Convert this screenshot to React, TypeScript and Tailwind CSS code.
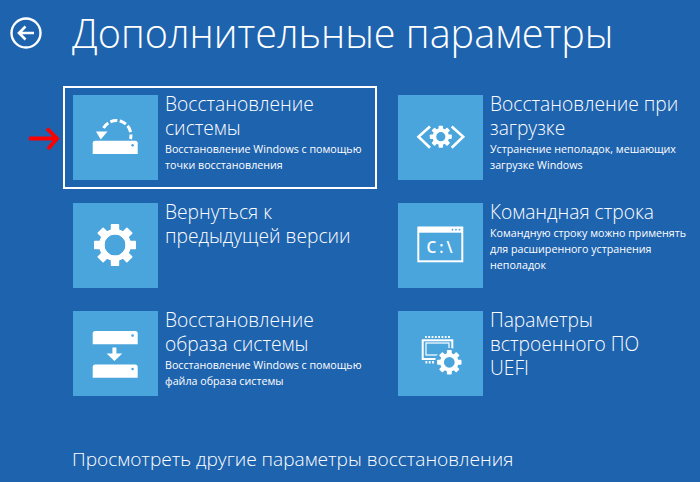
const teeth = (count: number) => Array.from({ length: count }, (_, i) => (360 / count) * i);

function Gear({ cx, cy, r, hole, count = 8, halo }: { cx: number; cy: number; r: number; hole: number; count?: number; halo?: boolean }) {
  const body = r * 0.76;
  const w = r * 0.4;
  return (
    <g>
      {halo && <circle cx={cx} cy={cy} r={r + 2} fill="#4ba5dd" />}
      {teeth(count).map((a) => (
        <rect key={a} x={cx - w / 2} y={cy - r} width={w} height={r * 0.5} rx={0.8} fill="#fff" transform={`rotate(${a} ${cx} ${cy})`} />
      ))}
      <circle cx={cx} cy={cy} r={(body + hole) / 2} fill="none" stroke="#fff" strokeWidth={body - hole} />
    </g>
  );
}

function Disk({ y }: { y: number }) {
  return (
    <g>
      <path d={`M19.7 ${y + 13.3}V${y + 2.5}q0-2.5 2.5-2.5H62.2q2.5 0 2.5 2.5V${y + 13.3}z`} fill="#fff" />
      <circle cx={59.6} cy={y + 4.6} r={1.3} fill="#4ba5dd" />
    </g>
  );
}

function RestoreIcon() {
  return (
    <>
      <path d="M30.5 33A14.7 14.7 0 0 1 57.5 44" fill="none" stroke="#fff" strokeWidth={3} strokeDasharray="7 2.4" />
      <Disk y={45.7} />
      <path d="M23 36.5L34.5 36.5L27.7 44.5z" fill="#fff" />
    </>
  );
}

function StartupIcon() {
  return (
    <>
      <path d="M32 31.5L20.5 41.7L32 52.7M53.7 31.5L65.2 41.7L53.7 52.7" fill="none" stroke="#fff" strokeWidth={2.6} />
      <Gear cx={42.8} cy={41.7} r={11} hole={4.6} />
    </>
  );
}

function CmdIcon() {
  return (
    <>
      <rect x={20.3} y={24.7} width={44} height={33.6} fill="none" stroke="#fff" strokeWidth={2} />
      <rect x={20} y={23.7} width={45} height={6} fill="#fff" />
      <circle cx={54.5} cy={26.7} r={0.9} fill="#4ba5dd" />
      <circle cx={58} cy={26.7} r={0.9} fill="#4ba5dd" />
      <circle cx={61.5} cy={26.7} r={0.9} fill="#4ba5dd" />
      <text x={43} y={49.7} textAnchor="middle" fill="#fff" fontSize={15.4} letterSpacing={3} fontWeight={600} fontFamily="'Open Sans', sans-serif">
        C:\
      </text>
    </>
  );
}

function ImageIcon() {
  return (
    <>
      <Disk y={20} />
      <Disk y={53.4} />
      <path d="M39.4 36.5H43.4V42.4H49.3L41.4 50L33.6 42.4H39.4z" fill="#fff" />
    </>
  );
}

function UefiIcon() {
  return (
    <>
      <rect x={24.7} y={29.3} width={29.6} height={18.7} fill="none" stroke="#fff" strokeWidth={2} />
      <rect x={28} y={32} width={23} height={12} fill="none" stroke="#fff" strokeWidth={1.2} />
      <path d="M27 26H52" stroke="#fff" strokeWidth={2.2} strokeDasharray="1.8 1.5" />
      <path d="M27.5 51.3H37" stroke="#fff" strokeWidth={2.4} strokeDasharray="1.8 1.5" />
      <Gear cx={51.3} cy={51.3} r={12.2} hole={5.4} halo />
    </>
  );
}

const items = [
  { title: 'Восстановление\nсистемы', text: 'Восстановление Windows с помощью\nточки восстановления', icon: <RestoreIcon />, selected: true },
  { title: 'Восстановление при\nзагрузке', text: 'Устранение неполадок, мешающих\nзагрузке Windows', icon: <StartupIcon /> },
  { title: 'Вернуться к\nпредыдущей версии', text: '', icon: <Gear cx={42} cy={42} r={21} hole={10.5} /> },
  { title: 'Командная строка', text: 'Командную строку можно применять\nдля расширенного устранения\nнеполадок', icon: <CmdIcon /> },
  { title: 'Восстановление\nобраза системы', text: 'Восстановление Windows с помощью\nфайла образа системы', icon: <ImageIcon /> },
  { title: 'Параметры\nвстроенного ПО\nUEFI', text: '', icon: <UefiIcon /> },
];

export default function App() {
  return (
    <div className="relative flex h-[482px] w-[700px] flex-col overflow-hidden bg-[#1e63ae] font-['Open_Sans',sans-serif] text-white">
      <div className="flex items-center pl-[10px] pt-[7px]">
        <svg width="32" height="32" viewBox="0 0 32 32" fill="none" stroke="#fff">
          <circle cx="16" cy="16" r="14.5" strokeWidth="2.4" />
          <path d="M24 16H9M15.5 9.5L9 16L15.5 22.5" strokeWidth="2.6" />
        </svg>
        <h1 className="ml-[30px] text-[39.6px] leading-[52px] font-light">Дополнительные параметры</h1>
      </div>

      <div className="mt-[36px] grid grid-cols-[325px_294px] gap-y-[23px] pl-[73px]">
        {items.map((item) => (
          <div key={item.title} className="relative flex h-[85px] gap-[7px]">
            {item.selected && <div className="absolute -left-[10px] -top-[9px] -bottom-[9px] w-[314px] border-2 border-white" />}
            <svg width="85" height="85" viewBox="0 0 85 85" className="shrink-0 bg-[#4ba5dd]">
              {item.icon}
            </svg>
            <div className="-mt-[3px]">
              <p className="whitespace-pre-line text-[19.2px] leading-[24px] font-light">{item.title}</p>
              {item.text && <p className="mt-[1px] whitespace-pre-line text-[10.7px] leading-[16px]">{item.text}</p>}
            </div>
          </div>
        ))}
      </div>

      <p className="mt-[50px] pl-[72px] text-[19.1px] leading-[26px] font-light">Просмотреть другие параметры восстановления</p>

      <svg width="34" height="24" viewBox="0 0 34 24" fill="none" stroke="#f00" strokeWidth="3.8" className="absolute left-[27px] top-[127px]">
        <path d="M2 11.5H29M20 1.5L30 11.5L21 22" />
      </svg>
    </div>
  );
}
